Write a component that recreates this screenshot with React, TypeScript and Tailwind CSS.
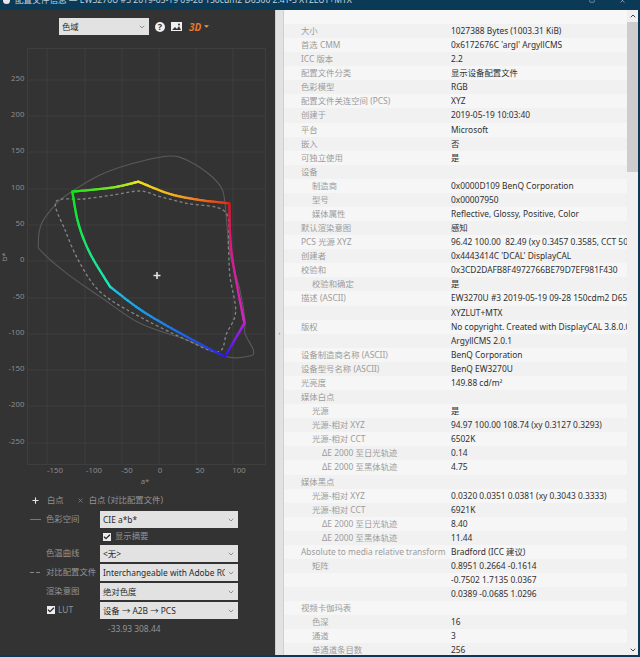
import type { ReactNode } from "react"
import { ChevronDown, ChevronUp, Check, X, Plus, Square } from "lucide-react"

type Pt = [number, number]

const XTICKS: [number, number, string][] = [
  [47, 55, "-150"], [85, 94, "-100"], [122, 127, "-50"], [159, 160, "0"], [196, 200, "50"], [233, 239, "100"],
]
const YTICKS: [number, string][] = [
  [80, "250"], [116, "200"], [152, "150"], [189, "100"], [225, "50"], [261, "0"],
  [298, "-50"], [334, "-100"], [370, "-150"], [406, "-200"], [443, "-250"],
]

// all curve points read off the reference at 3x, x/3 and y/3+120 gives page px
const OUTER: Pt[] = [
  [115, 370], [125, 310], [170, 250], [215, 215], [300, 165], [400, 130], [510, 108], [570, 125],
  [630, 165], [665, 205], [675, 250], [690, 400], [720, 510], [735, 600], [735, 640], [760, 690],
  [750, 708], [680, 710], [560, 660], [420, 610], [300, 530], [200, 460], [125, 395],
]
const DASHED: Pt[] = [
  [168, 245], [250, 237], [340, 225], [420, 213], [480, 230], [560, 250], [675, 275], [685, 380],
  [690, 470], [707, 575], [680, 640], [655, 695], [560, 660], [400, 580], [300, 515], [240, 430], [195, 330],
]
const GAMUT: { pts: Pt[]; stops: string[] }[] = [
  { pts: [[217, 215], [340, 202], [415, 185]], stops: ["#12e21a", "#7fe81f", "#f2e51c"] },
  { pts: [[415, 185], [510, 222], [600, 240], [688, 250]], stops: ["#f2e51c", "#f59a1e", "#e0281c"] },
  { pts: [[688, 250], [695, 400], [733, 610]], stops: ["#d8181c", "#d81a8c", "#d426c8"] },
  { pts: [[733, 610], [675, 710]], stops: ["#c020d8", "#7a20e0", "#2a1cd8"] },
  { pts: [[675, 710], [560, 650], [430, 575], [330, 500]], stops: ["#2a1cd8", "#1a80e8", "#18c8e8"] },
  { pts: [[330, 500], [270, 400], [235, 310], [217, 215]], stops: ["#18e8c0", "#18e860", "#12e21a"] },
]

const toPage = ([x, y]: Pt): Pt => [x / 3, y / 3 + 120]

function smooth(raw: Pt[], closed: boolean): string {
  const p = raw.map(toPage)
  const at = (i: number) => (closed ? p[(i + p.length) % p.length] : p[Math.max(0, Math.min(p.length - 1, i))])
  let d = "M" + p[0][0] + " " + p[0][1]
  const n = closed ? p.length : p.length - 1
  for (let i = 0; i < n; i++) {
    const [a, b, c, e] = [at(i - 1), at(i), at(i + 1), at(i + 2)]
    d += " C" + (b[0] + (c[0] - a[0]) / 6) + " " + (b[1] + (c[1] - a[1]) / 6) + " "
    d += (c[0] - (e[0] - b[0]) / 6) + " " + (c[1] - (e[1] - b[1]) / 6) + " " + c[0] + " " + c[1]
  }
  return closed ? d + " Z" : d
}

function mix(stops: string[], t: number): string {
  const pos = t * (stops.length - 1)
  const i = Math.min(Math.floor(pos), stops.length - 2)
  const f = pos - i
  const rgb = (h: string) => [1, 3, 5].map((k) => parseInt(h.slice(k, k + 2), 16))
  const a = rgb(stops[i])
  const b = rgb(stops[i + 1])
  return "rgb(" + a.map((v, k) => Math.round(v + (b[k] - v) * f)).join(",") + ")"
}

// walks the polyline in small steps so the stroke can change colour along it
function sample(raw: Pt[], steps: number): Pt[] {
  const p = raw.map(toPage)
  const out: Pt[] = []
  const n = p.length - 1
  for (let s = 0; s <= steps; s++) {
    const u = (s / steps) * n
    const i = Math.min(Math.floor(u), n - 1)
    const t = u - i
    const a = p[Math.max(0, i - 1)]
    const b = p[i]
    const c = p[i + 1]
    const e = p[Math.min(n, i + 2)]
    const cr = (k: 0 | 1) =>
      0.5 * (2 * b[k] + (c[k] - a[k]) * t + (2 * a[k] - 5 * b[k] + 4 * c[k] - e[k]) * t * t + (3 * b[k] - a[k] - 3 * c[k] + e[k]) * t * t * t)
    out.push([cr(0), cr(1)])
  }
  return out
}

function Chart() {
  return (
    <svg viewBox="0 35 275 453" className="block h-[453px] w-[275px] shrink-0">
      <rect x="27.5" y="48.5" width="238" height="416" fill="none" stroke="#3e3e3e" />
      {XTICKS.map(([x]) => (
        <line key={x} x1={x} x2={x} y1="48" y2="464" stroke="#3e3e3e" />
      ))}
      {YTICKS.map(([y]) => (
        <line key={y} x1="27" x2="265" y1={y} y2={y} stroke="#3e3e3e" />
      ))}
      <g fontSize="7.8" fill="#8c8c8c">
        {YTICKS.map(([y, label]) => (
          <text key={y} x="24.5" y={y + 1} textAnchor="end">{label}</text>
        ))}
        {XTICKS.map(([x, lx, label]) => (
          <text key={x} x={lx} y="473" textAnchor="middle">{label}</text>
        ))}
        <text x="145" y="484" textAnchor="middle">a*</text>
        <text transform="translate(7 257) rotate(-90)" textAnchor="middle">b*</text>
      </g>
      <path d={smooth(OUTER, true)} fill="none" stroke="#5a5a5a" strokeWidth="1.1" />
      <path d={smooth(DASHED, true)} fill="none" stroke="#858585" strokeWidth="1.3" strokeDasharray="3 2.5" />
      {GAMUT.map((seg, i) => {
        const pts = sample(seg.pts, 40)
        return pts.slice(1).map((p, k) => (
          <line
            key={i + "-" + k}
            x1={pts[k][0]}
            y1={pts[k][1]}
            x2={p[0]}
            y2={p[1]}
            stroke={mix(seg.stops, k / 39)}
            strokeWidth="2.3"
            strokeLinecap="round"
          />
        ))
      })}
      <path d="M153.5 275.5h7M157 272v7" stroke="#e4e4e4" strokeWidth="1.6" />
    </svg>
  )
}

function Combo({ children, className = "" }: { children: ReactNode; className?: string }) {
  return (
    <div className={"flex h-[17px] items-center bg-[#e2e2e2] pl-[3px] pr-[3px] text-[8.4px] leading-[14px] text-[#2a2a2a] " + className}>
      <span className="min-w-0 flex-1 overflow-hidden whitespace-nowrap">{children}</span>
      <ChevronDown className="ml-[2px] h-[8px] w-[8px] shrink-0 text-[#666]" />
    </div>
  )
}

function Tick() {
  return (
    <span className="flex h-[8px] w-[8px] items-center justify-center bg-[#ececec]">
      <Check className="h-[8px] w-[8px] text-[#222]" strokeWidth={3.5} />
    </span>
  )
}

function ControlRow({ marker, label, value }: { marker?: ReactNode; label: ReactNode; value: ReactNode }) {
  return (
    <div className="flex h-[17px] items-center">
      <span className="flex w-[16px] items-center gap-[2px]">{marker}</span>
      <span className="w-[54px] whitespace-nowrap text-[8.4px]">{label}</span>
      <Combo className="w-[138px]">{value}</Combo>
    </div>
  )
}

function LeftPanel() {
  return (
    <div className="flex w-[275px] shrink-0 flex-col bg-[#333333] text-[#949494]">
      <div className="flex items-center pl-[59px] pt-[8px]">
        <Combo className="w-[90px]">色域</Combo>
        <span className="ml-[6px] flex h-[10px] w-[10px] items-center justify-center rounded-full bg-[#f0f0f0] text-[9px] font-bold leading-none text-[#333]">?</span>
        <svg viewBox="0 0 11 9" className="ml-[6px] h-[9px] w-[11px]">
          <rect width="11" height="9" fill="#f0f0f0" />
          <path d="M1 8l3-3 2 2 2-3 2 4z" fill="#333" />
          <circle cx="8" cy="2.5" r="1" fill="#333" />
        </svg>
        <span className="ml-[7px] text-[10px] font-bold italic leading-none text-[#e8772e]">3D</span>
        <svg viewBox="0 0 6 3" className="ml-[3px] h-[3px] w-[5px]">
          <path d="M0 0h6L3 3z" fill="#eda03c" />
        </svg>
      </div>
      <Chart />
      <div className="mt-[5px] flex h-[14px] items-center pl-[31px] text-[8.4px]">
        <Plus className="h-[9px] w-[9px] text-[#e8e8e8]" strokeWidth={3} />
        <span className="ml-[7px]">白点</span>
        <X className="ml-[13px] h-[7px] w-[7px] text-[#9a9a9a]" strokeWidth={2} />
        <span className="ml-[5px]">白点 (对比配置文件)</span>
      </div>
      <div className="mt-[4px] flex flex-col pl-[30px]">
        <ControlRow marker={<span className="h-px w-[11px] bg-[#777]" />} label="色彩空间" value="CIE a*b*" />
        <div className="flex h-[17px] items-center gap-[4px] pl-[73px] text-[8.4px]">
          <Tick />
          <span>显示摘要</span>
        </div>
        <ControlRow label="色温曲线" value="<无>" />
        <div className="mt-[2px]">
          <ControlRow
            marker={
              <>
                <span className="h-px w-[4px] bg-[#888]" />
                <span className="h-px w-[4px] bg-[#888]" />
              </>
            }
            label="对比配置文件"
            value="Interchangeable with Adobe RGB"
          />
        </div>
        <div className="mt-[2px]">
          <ControlRow label="渲染意图" value="绝对色度" />
        </div>
        <div className="mt-[2px]">
          <ControlRow
            label={
              <span className="flex items-center gap-[3px] pl-px">
                <Tick />
                LUT
              </span>
            }
            value="设备 → A2B → PCS"
          />
        </div>
        <div className="mt-[4px] pl-[78px] text-[8.4px]">-33.93 308.44</div>
      </div>
    </div>
  )
}

const DE_DAYLIGHT = "ΔE 2000 至日光轨迹"
const DE_BLACKBODY = "ΔE 2000 至黑体轨迹"

const ROWS: [number, string, string][] = [
  [0, "大小", "1027388 Bytes (1003.31 KiB)"],
  [0, "首选 CMM", "0x6172676C 'argl' ArgyllCMS"],
  [0, "ICC 版本", "2.2"],
  [0, "配置文件分类", "显示设备配置文件"],
  [0, "色彩模型", "RGB"],
  [0, "配置文件关连空间 (PCS)", "XYZ"],
  [0, "创建于", "2019-05-19 10:03:40"],
  [0, "平台", "Microsoft"],
  [0, "嵌入", "否"],
  [0, "可独立使用", "是"],
  [0, "设备", ""],
  [1, "制造商", "0x0000D109 BenQ Corporation"],
  [1, "型号", "0x00007950"],
  [1, "媒体属性", "Reflective, Glossy, Positive, Color"],
  [0, "默认渲染意图", "感知"],
  [0, "PCS 光源 XYZ", "96.42 100.00  82.49 (xy 0.3457 0.3585, CCT 5000K)"],
  [0, "创建者", "0x4443414C 'DCAL' DisplayCAL"],
  [0, "校验和", "0x3CD2DAFB8F4972766BE79D7EF981F430"],
  [1, "校验和确定", "是"],
  [0, "描述 (ASCII)", "EW3270U #3 2019-05-19 09-28 150cdm2 D6500 2.4T-3"],
  [0, "", "XYZLUT+MTX"],
  [0, "版权", "No copyright. Created with DisplayCAL 3.8.0.0 and"],
  [0, "", "ArgyllCMS 2.0.1"],
  [0, "设备制造商名称 (ASCII)", "BenQ Corporation"],
  [0, "设备型号名称 (ASCII)", "BenQ EW3270U"],
  [0, "光亮度", "149.88 cd/m²"],
  [0, "媒体白点", ""],
  [1, "光源", "是"],
  [1, "光源-相对 XYZ", "94.97 100.00 108.74 (xy 0.3127 0.3293)"],
  [1, "光源-相对 CCT", "6502K"],
  [2, DE_DAYLIGHT, "0.14"],
  [2, DE_BLACKBODY, "4.75"],
  [0, "媒体黑点", ""],
  [1, "光源-相对 XYZ", "0.0320 0.0351 0.0381 (xy 0.3043 0.3333)"],
  [1, "光源-相对 CCT", "6921K"],
  [2, DE_DAYLIGHT, "8.40"],
  [2, DE_BLACKBODY, "11.44"],
  [0, "Absolute to media relative transform", "Bradford (ICC 建议)"],
  [1, "矩阵", "0.8951 0.2664 -0.1614"],
  [0, "", "-0.7502 1.7135 0.0367"],
  [0, "", "0.0389 -0.0685 1.0296"],
  [0, "视频卡伽玛表", ""],
  [1, "色深", "16"],
  [1, "通道", "3"],
  [1, "单通道条目数", "256"],
]

function InfoPanel() {
  return (
    <div className="flex min-w-0 flex-1 bg-[#f7f7f7]">
      <div className="flex w-[9px] shrink-0 items-center justify-center border-x border-[#cfcfcf] bg-[#e2e2e2]">
        <span className="text-[6px] leading-none text-[#666]">›</span>
      </div>
      <div className="min-w-0 flex-1 overflow-hidden pt-[14px]">
        {ROWS.map(([depth, label, value], i) => (
          <div
            key={i}
            className={"grid h-[14.09px] grid-cols-[167px_1fr] text-[8.4px] leading-[14px] " + (i % 2 === 0 ? "bg-[#f1f1f1]" : "bg-[#f6f6f6]")}
          >
            <span
              className={
                "whitespace-nowrap text-[#9c9c9c] " +
                (depth === 0 ? "pl-[17px]" : depth === 1 ? "pl-[28px]" : "pl-[38px]")
              }
            >
              {label}
            </span>
            <span className="overflow-hidden whitespace-pre text-[#303030]">{value}</span>
          </div>
        ))}
      </div>
      <div className="flex w-[11px] shrink-0 flex-col items-center bg-[#f0f0f0]">
        <ChevronUp className="mt-[2px] h-[8px] w-[8px] text-[#444]" strokeWidth={3} />
        <div className="mt-[2px] h-[150px] w-full bg-[#cdcdcd]" />
        <div className="flex-1" />
        <ChevronDown className="mb-px h-[8px] w-[8px] text-[#444]" strokeWidth={3} />
      </div>
    </div>
  )
}

export default function App() {
  return (
    <div className="flex h-[657px] w-[640px] flex-col overflow-hidden bg-[#0b3a56] font-['Noto_Sans','Noto_Sans_CJK_SC',sans-serif]">
      <div className="flex h-[10px] shrink-0 items-start overflow-hidden pl-[3px] pr-[14px] text-[8.6px] leading-[12px] text-[#c4d2dc]">
        <span className="-mt-[3px] mr-[5px] h-[7px] w-[7px] shrink-0 rounded-full bg-[#ece4ec]" />
        <span className="-mt-[6px] flex-1 whitespace-nowrap">配置文件信息 — EW3270U #3 2019-05-19 09-28 150cdm2 D6500 2.4T-3 XYZLUT+MTX</span>
        <Square className="-mt-[3px] h-[6px] w-[6px] shrink-0" />
        <X className="-mt-[3px] ml-[24px] h-[7px] w-[7px] shrink-0" />
      </div>
      <div className="flex min-h-0 flex-1 pr-[2px] pb-[2px]">
        <LeftPanel />
        <InfoPanel />
      </div>
    </div>
  )
}
